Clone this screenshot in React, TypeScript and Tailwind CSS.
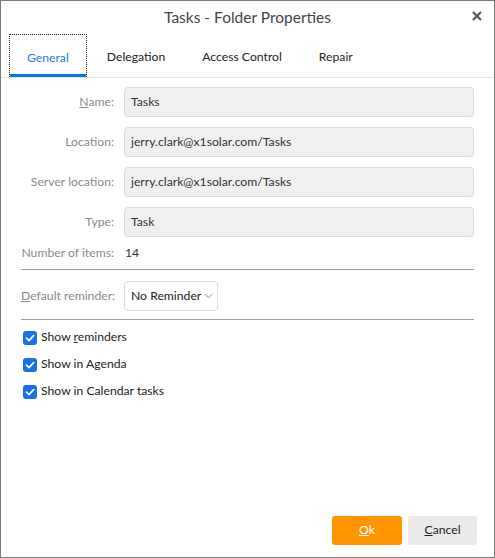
import React from 'react';

const fields = [
  { label: 'Name:', value: 'Tasks', key: 'N' },
  { label: 'Location:', value: 'jerry.clark@x1solar.com/Tasks' },
  { label: 'Server location:', value: 'jerry.clark@x1solar.com/Tasks' },
  { label: 'Type:', value: 'Task' },
];

function Check({ children }: { children: React.ReactNode }) {
  return (
    <div className="flex items-center h-[27px]">
      <span className="w-[14px] h-[14px] rounded-[3px] bg-[#1672e6] flex items-center justify-center">
        <svg viewBox="0 0 14 14" className="w-[14px] h-[14px]">
          <path d="M3.5 7.2 L6 9.6 L10.6 4.6" fill="none" stroke="white" strokeWidth="1.7" strokeLinecap="round" strokeLinejoin="round" />
        </svg>
      </span>
      <span className="ml-[4px] text-[#222]">{children}</span>
    </div>
  );
}

export default function App() {
  return (
    <div className="w-[495px] h-[558px] border border-[#7a7a7a] bg-white flex flex-col text-[12.2px] text-[#222] whitespace-nowrap" style={{ fontFamily: 'Lato, "Noto Sans", sans-serif' }}>
      {/* title */}
      <div className="relative h-[33px] flex items-center justify-center">
        <span className="text-[15.5px] text-[#444]">Tasks - Folder Properties</span>
        <svg viewBox="0 0 10 10" className="absolute right-[12px] top-[10px] w-[10px] h-[10px]">
          <path d="M1 1 L9 9 M9 1 L1 9" stroke="#555" strokeWidth="2.2" />
        </svg>
      </div>

      {/* tabs */}
      <div className="flex gap-[3px] pl-[8px] border-b border-[#e3e3e3] h-[44px]">
        <div className="relative px-[17px] pt-[4px] flex items-center border border-dotted border-[#222] border-b-0 text-[#2a7bea]">
          General
          <span className="absolute left-0 right-0 bottom-0 h-[3px] bg-[#0a74ef]" />
        </div>
        <div className="px-[17px] pt-[4px] flex items-center">Delegation</div>
        <div className="px-[17px] pt-[4px] flex items-center">Access Control</div>
        <div className="px-[17px] pt-[4px] flex items-center">Repair</div>
      </div>

      {/* body */}
      <div className="flex-1 flex flex-col px-[20px] pt-[9px]">
        <div className="flex flex-col gap-[10px]">
          {fields.map((f) => (
            <div key={f.label} className="flex items-center">
              <div className="w-[93px] text-right text-[#8a8a8a]">
                {f.key ? (
                  <>
                    <u>{f.label[0]}</u>
                    {f.label.slice(1)}
                  </>
                ) : (
                  f.label
                )}
              </div>
              <div className="ml-[10px] flex-1 h-[30px] rounded-[4px] bg-[#f0f0f0] border border-[#dcdcdc] flex items-center px-[6px] text-[#333]">
                {f.value}
              </div>
            </div>
          ))}
        </div>

        <div className="flex items-center h-[20px] mt-[6px]">
          <div className="w-[93px] text-right text-[#8a8a8a]">Number of items:</div>
          <div className="ml-[11px] text-[#333]">14</div>
        </div>

        <div className="h-px bg-[#a0a0a0] mt-[6px]" />

        <div className="flex items-center mt-[11px]">
          <div className="w-[93px] text-right text-[#8a8a8a]">
            <u>D</u>efault reminder:
          </div>
          <div className="ml-[10px] w-[94px] h-[30px] rounded-[4px] border border-[#dcdcdc] bg-white flex items-center pl-[6px] pr-[4px] text-[#222]">
            <span className="flex-1">No Reminder</span>
            <svg viewBox="0 0 10 6" className="w-[9px] h-[6px]">
              <path d="M1 1 L5 5 L9 1" fill="none" stroke="#888" strokeWidth="1.1" />
            </svg>
          </div>
        </div>

        <div className="h-px bg-[#a0a0a0] mt-[8px]" />

        <div className="flex flex-col mt-[4px] pl-[2px]">
          <Check>
            Show <u>r</u>eminders
          </Check>
          <Check>Show in Agenda</Check>
          <Check>Show in Calendar tasks</Check>
        </div>

        <div className="flex-1" />

        <div className="flex justify-end gap-[6px] pb-[12px] mr-[-3px]">
          <button className="w-[70px] h-[29px] rounded-[3px] bg-[#ff9500] text-white">
            <u>O</u>k
          </button>
          <button className="w-[69px] h-[29px] rounded-[3px] bg-[#ebebeb] text-[#222]">
            <u>C</u>ancel
          </button>
        </div>
      </div>
    </div>
  );
}
